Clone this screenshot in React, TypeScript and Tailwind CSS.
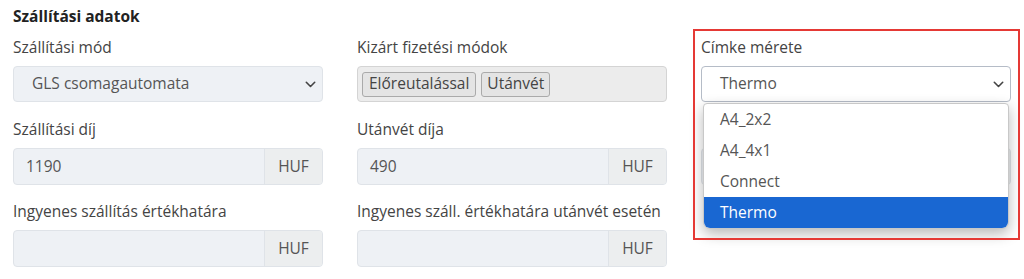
import React from "react";

const Chevron = () => (
  <svg width="11" height="7" viewBox="0 0 11 7">
    <path d="M1.3 1.3 L5.5 5.5 L9.7 1.3" fill="none" stroke="#444" strokeWidth="1.6" strokeLinecap="round" strokeLinejoin="round" />
  </svg>
);

const Label = ({ children }: { children: React.ReactNode }) => (
  <div className="text-[15.5px] leading-[22px] text-[#444] mb-[8px]">{children}</div>
);

const AddonInput = ({ value }: { value: string }) => (
  <div className="flex h-[37px] rounded-[4px] border border-[#dfe3e8] bg-[#eef1f5] overflow-hidden">
    <div className="flex-1 flex items-center pl-[12px] text-[15.5px] text-[#555]">{value}</div>
    <div className="w-[58px] flex items-center justify-center border-l border-[#dfe3e8] bg-[#eceeef] text-[15.5px] text-[#555]">HUF</div>
  </div>
);

export default function App() {
  return (
    <div className="w-[1024px] h-[279px] bg-white relative overflow-hidden" style={{ fontFamily: '"Open Sans", sans-serif' }}>
      <div className="pl-[13px] pt-[5px] text-[15.5px] font-bold text-[#222] leading-[22px]">Szállítási adatok</div>
      <div className="grid grid-cols-[310px_310px_310px] gap-x-[34px] pl-[13px] mt-[9px]">
        <div>
          <Label>Szállítási mód</Label>
          <div className="flex items-center justify-between h-[36px] rounded-[4px] border border-[#dfe3e8] bg-[#eef1f5] pl-[18px] pr-[6px] text-[15.5px] text-[#555]">
            <span>GLS csomagautomata</span>
            <Chevron />
          </div>
        </div>
        <div>
          <Label>Kizárt fizetési módok</Label>
          <div className="flex items-center gap-[5px] h-[36px] rounded-[4px] border border-[#d4d4d4] bg-[#ececec] pl-[4px] text-[15.5px] text-[#444]">
            <span className="h-[25px] flex items-center px-[6px] rounded-[3px] border border-[#aaa] bg-[#e4e4e4]">Előreutalással</span>
            <span className="h-[25px] flex items-center px-[5px] rounded-[3px] border border-[#aaa] bg-[#e4e4e4]">Utánvét</span>
          </div>
        </div>
        <div>
          <Label>Címke mérete</Label>
          <div className="flex items-center justify-between h-[36px] rounded-[4px] border border-[#b5bcc7] bg-white pl-[18px] pr-[6px] text-[15.5px] text-[#555]">
            <span>Thermo</span>
            <Chevron />
          </div>
        </div>
        <div className="mt-[16px]">
          <Label>Szállítási díj</Label>
          <AddonInput value="1190" />
        </div>
        <div className="mt-[16px]">
          <Label>Utánvét díja</Label>
          <AddonInput value="490" />
        </div>
        <div className="mt-[16px]">
          <Label>&nbsp;</Label>
          <AddonInput value="" />
        </div>
        <div className="mt-[15px]">
          <Label>Ingyenes szállítás értékhatára</Label>
          <AddonInput value="" />
        </div>
        <div className="mt-[15px]">
          <Label>Ingyenes száll. értékhatára utánvét esetén</Label>
          <AddonInput value="" />
        </div>
        <div />
      </div>

      <div className="absolute left-[703px] top-[103px] w-[306px] bg-white rounded-b-[7px] rounded-t-[4px] border border-[#c8c8c8] shadow-[0_5px_14px_rgba(0,0,0,0.28)] overflow-hidden text-[15.5px]">
        <div className="h-[31px] flex items-center pl-[16px] text-[#555]">A4_2x2</div>
        <div className="h-[31px] flex items-center pl-[16px] text-[#555]">A4_4x1</div>
        <div className="h-[31px] flex items-center pl-[16px] text-[#555]">Connect</div>
        <div className="h-[31px] flex items-center pl-[16px] text-white bg-[#1967d2]">Thermo</div>
      </div>

      <div className="absolute left-[693px] top-[29px] w-[327px] h-[211px] border-2 border-[#e53935] pointer-events-none" />
    </div>
  );
}
